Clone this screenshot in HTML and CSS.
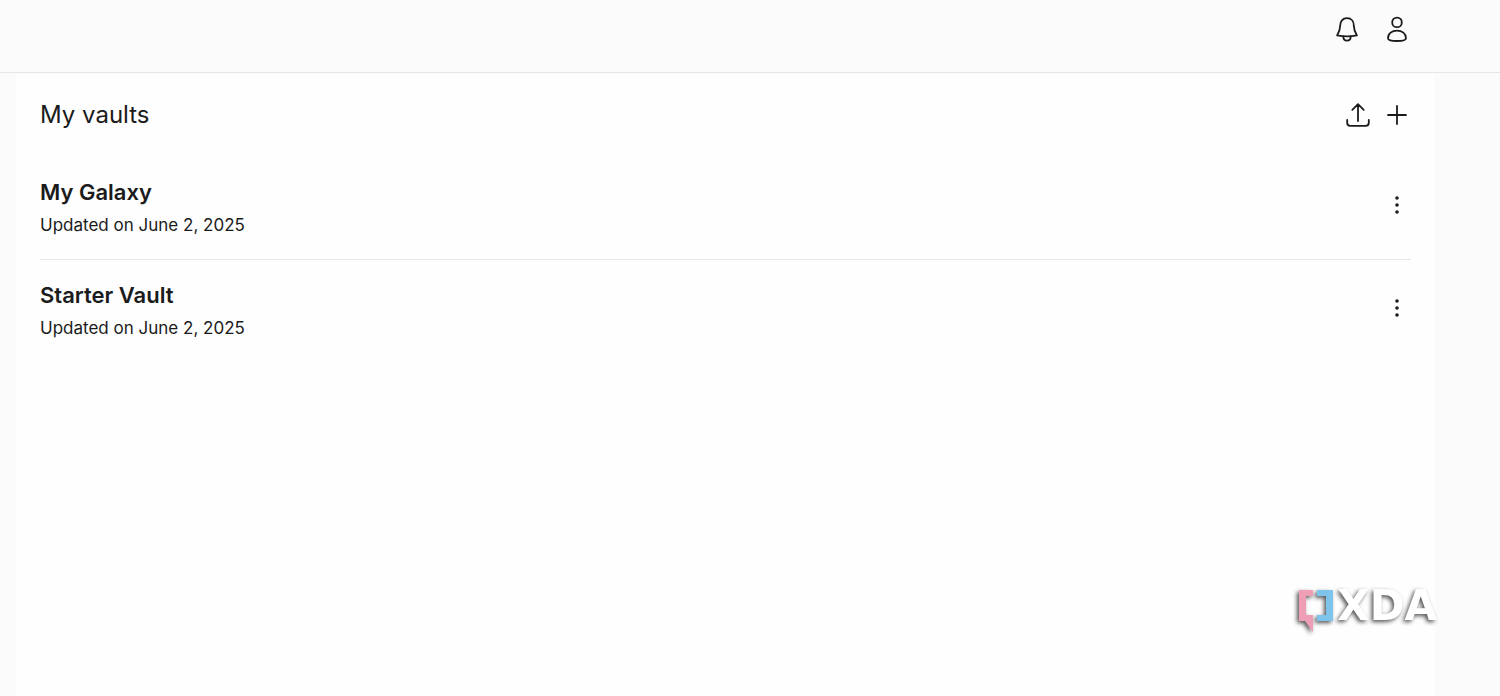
FILE: index.html
```html
<!DOCTYPE html>
<html lang="en">
<head>
<meta charset="utf-8">
<meta name="viewport" content="width=device-width, initial-scale=1">
<title>My vaults</title>
<link rel="stylesheet" href="styles.css">
</head>
<body>
<header class="topbar">
  <button class="icon-button" type="button" aria-label="Notifications">
    <svg viewBox="0 0 28 28"><path d="M14 3.2C9.6 3.2 7.2 6.4 7.2 10.5C7.2 14.4 6.3 16.7 4.1 20.4Q14 22.2 23.9 20.4C21.7 16.7 20.8 14.4 20.8 10.5C20.8 6.4 18.4 3.2 14 3.2Z"/><path d="M10.3 21.5C10.3 27 17.7 27 17.7 21.5"/></svg>
  </button>
  <button class="icon-button" type="button" aria-label="Account">
    <svg viewBox="0 0 28 28"><circle cx="14" cy="7.4" r="4.8"/><path d="M5 23.2C5 18.4 9 15.6 14 15.6S23 18.4 23 23.2C23 25.3 20 26 14 26S5 25.3 5 23.2Z"/></svg>
  </button>
</header>
<main class="panel">
  <div class="panel-head">
    <h1 class="title">My vaults</h1>
    <div class="actions">
      <button class="icon-button" type="button" aria-label="Upload vault">
        <svg viewBox="0 0 28 28"><path d="M14 20V3.5M8.3 8.8L14 3.2L19.7 8.8M3.2 19V21.8Q3.2 24.8 6.2 24.8H21.8Q24.8 24.8 24.8 21.8V19"/></svg>
      </button>
      <button class="icon-button" type="button" aria-label="Add vault">
        <svg viewBox="0 0 28 28"><path d="M14 5V23M5 14H23"/></svg>
      </button>
    </div>
  </div>
  <ul class="vaults">
    <li class="vault">
      <div>
        <h2 class="vault-name">My Galaxy</h2>
        <p class="vault-date">Updated on June 2, 2025</p>
      </div>
      <button class="icon-button dots" type="button" aria-label="My Galaxy options">
        <svg viewBox="0 0 28 28"><circle cx="14" cy="7" r="1.8"/><circle cx="14" cy="14" r="1.8"/><circle cx="14" cy="21" r="1.8"/></svg>
      </button>
    </li>
    <li class="vault">
      <div>
        <h2 class="vault-name">Starter Vault</h2>
        <p class="vault-date">Updated on June 2, 2025</p>
      </div>
      <button class="icon-button dots" type="button" aria-label="Starter Vault options">
        <svg viewBox="0 0 28 28"><circle cx="14" cy="7" r="1.8"/><circle cx="14" cy="14" r="1.8"/><circle cx="14" cy="21" r="1.8"/></svg>
      </button>
    </li>
  </ul>
</main>
<div class="watermark">
  <svg class="mark" viewBox="0 0 36 44"><path fill="#ee9fb5" d="M0 0H14V6H7V25H14V42L6 31H0Z"/><path fill="#7dc3ea" d="M18 0H34V31H18V25H27V6H18Z"/></svg>
  <span class="wordmark">XDA</span>
</div>
</body>
</html>
```

FILE: styles.css
```css
* {
  box-sizing: border-box;
}

body {
  display: flex;
  flex-direction: column;
  min-height: 100vh;
  margin: 0;
  background: #fbfbfb;
  color: #1b1b1b;
  font-family: Inter, "Liberation Sans", sans-serif;
}

h1, h2, p, ul {
  margin: 0;
  padding: 0;
}

.topbar {
  display: flex;
  gap: 22px;
  justify-content: flex-end;
  padding: 15px 89px 29px 40px;
  border-bottom: 1px solid #e6e6e6;
}

.icon-button {
  width: 28px;
  height: 28px;
  padding: 0;
  border: 0;
  background: none;
  color: inherit;
  cursor: pointer;
}

.icon-button svg {
  display: block;
  width: 100%;
  height: 100%;
  fill: none;
  stroke: currentColor;
  stroke-width: 1.8;
  stroke-linecap: round;
  stroke-linejoin: round;
}

.dots {
  margin-bottom: 4px;
}

.dots svg {
  fill: currentColor;
  stroke: none;
}

.panel {
  flex: 1;
  margin: 0 65px 0 16px;
  padding: 25px 24px;
  background: #fefefe;
}

.panel-head,
.vault {
  display: flex;
  align-items: center;
  justify-content: space-between;
}

.panel-head {
  padding-bottom: 25px;
}

.title {
  font-size: 24px;
  font-weight: 400;
  line-height: 34px;
}

.actions {
  display: flex;
  gap: 11px;
}

.vaults {
  list-style: none;
}

.vault {
  padding: 17px 0 19px;
}

.vault + .vault {
  border-top: 1px solid #e8e8e8;
}

.vault-name {
  font-size: 22px;
  font-weight: 600;
  line-height: 36px;
}

.vault-date {
  font-size: 17px;
  line-height: 30px;
}

.watermark {
  position: absolute;
  right: 63px;
  bottom: 62px;
  display: flex;
  align-items: flex-start;
  gap: 2px;
  filter: drop-shadow(-2px 2px 2px #000a);
}

.mark {
  width: 36px;
  height: 44px;
}

.wordmark {
  color: #fff;
  font-family: "DejaVu Sans", sans-serif;
  font-size: 42px;
  font-weight: 700;
  line-height: 32px;
}
```
